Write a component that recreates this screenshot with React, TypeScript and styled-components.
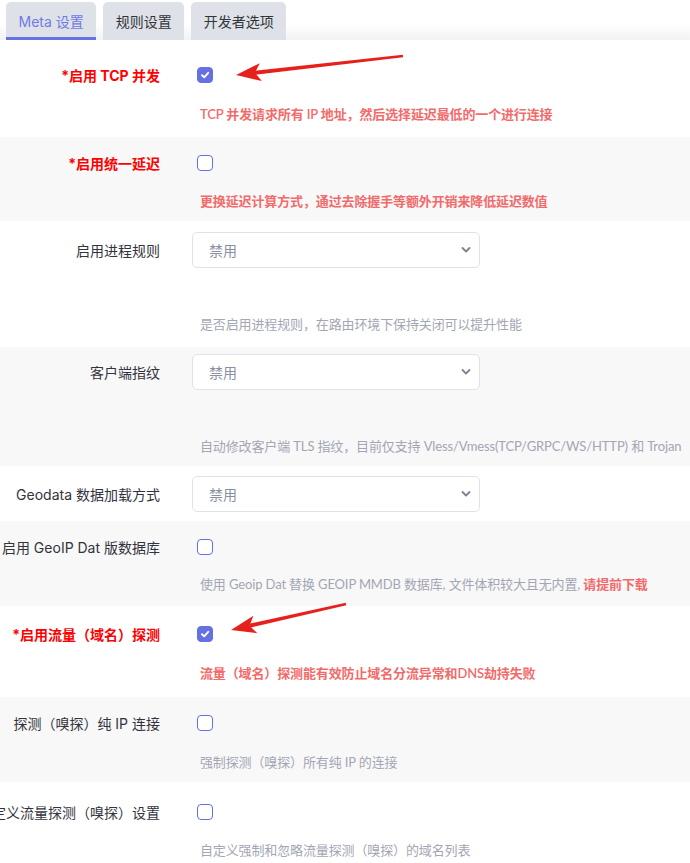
import React from "react";
import styled, { createGlobalStyle } from "styled-components";

const Global = createGlobalStyle`
  html, body { margin: 0; padding: 0; background: #fff; overflow: hidden; }
  body { font-family: Inter, "Noto Sans CJK SC", "Noto Sans", sans-serif; }
  * { box-sizing: border-box; }
`;

const Page = styled.div`
  position: relative;
  width: 690px;
  height: 863px;
  overflow: hidden;
`;

const TabBar = styled.div`
  display: flex;
  gap: 7px;
  height: 40px;
  padding: 2px 0 0 6px;
  background: linear-gradient(to bottom, #ffffff 60%, #f1f2f4 100%);
`;

const Tab = styled.div<{ $active?: boolean }>`
  display: flex;
  align-items: center;
  padding: 0 12.5px;
  height: 38px;
  background: #dee2e8;
  border-radius: 5px 5px 0 0;
  font-size: 14px;
  color: ${(p) => (p.$active ? "#6f7ae6" : "#33343a")};
  border-bottom: 3px solid ${(p) => (p.$active ? "#6572e2" : "transparent")};
  padding-top: 2px;
`;

const Row = styled.div<{ $grey?: boolean; $pt: number; $pb: number }>`
  display: grid;
  grid-template-columns: 160px 1fr;
  column-gap: 32px;
  background: ${(p) => (p.$grey ? "#f8f8f8" : "#ffffff")};
  padding: ${(p) => p.$pt}px 0 ${(p) => p.$pb}px 0;
`;

const LabelCell = styled.div<{ $h: number }>`
  display: flex;
  justify-content: flex-end;
  align-items: center;
  height: ${(p) => p.$h}px;
`;

const Label = styled.span<{ $req?: boolean }>`
  white-space: nowrap;
  font-size: 14px;
  color: ${(p) => (p.$req ? "#ff0000" : "#32333d")};
  font-weight: ${(p) => (p.$req ? 700 : 400)};
`;

const Content = styled.div`
  display: flex;
  flex-direction: column;
  align-items: flex-start;
  min-width: 0;
`;

const ControlLine = styled.div<{ $h: number }>`
  display: flex;
  align-items: center;
  height: ${(p) => p.$h}px;
`;

const Box = styled.span<{ $checked?: boolean }>`
  display: inline-flex;
  align-items: center;
  justify-content: center;
  width: 16px;
  height: 16px;
  margin-left: 5px;
  border-radius: 4px;
  border: 1px solid #6570e3;
  background: ${(p) => (p.$checked ? "#6570e3" : "#fff")};
`;

const Select = styled.div`
  display: flex;
  align-items: center;
  justify-content: space-between;
  width: 288px;
  height: 36px;
  border: 1px solid #dfe2e7;
  border-radius: 5px;
  background: #fff;
  padding: 0 8px 0 16px;
  font-size: 14px;
  color: #8a90a2;
`;

const Desc = styled.div<{ $mt: number; $red?: boolean }>`
  margin-top: ${(p) => p.$mt}px;
  padding-left: 8px;
  height: 20px;
  line-height: 20px;
  font-family: Lato, "Noto Sans CJK SC", sans-serif;
  font-size: 13px;
  letter-spacing: -0.13px;
  white-space: nowrap;
  color: ${(p) => (p.$red ? "#f36a6a" : "#a3a6b4")};
  font-weight: ${(p) => (p.$red ? 600 : 400)};
`;

const Strong = styled.span`
  color: #f36a6a;
  font-weight: 700;
`;

const Overlay = styled.svg`
  position: absolute;
  left: 0;
  top: 0;
  pointer-events: none;
`;

const Check = () => (
  <svg width="10" height="10" viewBox="0 0 10 10">
    <path d="M2 5.2 L4.2 7.3 L8.2 2.8" stroke="#fff" strokeWidth="1.9" fill="none" strokeLinecap="round" strokeLinejoin="round" />
  </svg>
);

const Chevron = () => (
  <svg width="10" height="8" viewBox="0 0 10 8">
    <path d="M1.5 2 L5 5.5 L8.5 2" stroke="#7b8293" strokeWidth="1.8" fill="none" strokeLinecap="round" strokeLinejoin="round" />
  </svg>
);

type RowDef = {
  label: string;
  req?: boolean;
  kind: "check" | "select";
  checked?: boolean;
  desc?: React.ReactNode;
  redDesc?: boolean;
  grey?: boolean;
  pt: number;
  pb: number;
  mt?: number;
};

const rows: RowDef[] = [
  { label: "*启用 TCP 并发", req: true, kind: "check", checked: true, desc: "TCP 并发请求所有 IP 地址，然后选择延迟最低的一个进行连接", redDesc: true, pt: 25, pb: 13, mt: 19 },
  { label: "*启用统一延迟", req: true, kind: "check", desc: "更换延迟计算方式，通过去除握手等额外开销来降低延迟数值", redDesc: true, grey: true, pt: 16, pb: 10, mt: 18 },
  { label: "启用进程规则", kind: "select", desc: "是否启用进程规则，在路由环境下保持关闭可以提升性能", pt: 11, pb: 13, mt: 46 },
  { label: "客户端指纹", kind: "select", desc: "自动修改客户端 TLS 指纹，目前仅支持 Vless/Vmess(TCP/GRPC/WS/HTTP) 和 Trojan", grey: true, pt: 7, pb: 10, mt: 46 },
  { label: "Geodata 数据加载方式", kind: "select", pt: 10, pb: 9 },
  {
    label: "启用 GeoIP Dat 版数据库",
    kind: "check",
    desc: (
      <>
        使用 Geoip Dat 替换 GEOIP MMDB 数据库, 文件体积较大且无内置, <Strong>请提前下载</Strong>
      </>
    ),
    grey: true,
    pt: 16,
    pb: 12,
    mt: 17,
  },
  { label: "*启用流量（域名）探测", req: true, kind: "check", checked: true, desc: "流量（域名）探测能有效防止域名分流异常和DNS劫持失败", redDesc: true, pt: 18, pb: 14, mt: 19 },
  { label: "探测（嗅探）纯 IP 连接", kind: "check", desc: "强制探测（嗅探）所有纯 IP 的连接", grey: true, pt: 16, pb: 10, mt: 19 },
  { label: "自定义流量探测（嗅探）设置", kind: "check", desc: "自定义强制和忽略流量探测（嗅探）的域名列表", pt: 20, pb: 10, mt: 18 },
];

const Arrow = ({ tip, tail }: { tip: [number, number]; tail: [number, number] }) => {
  const dx = tail[0] - tip[0];
  const dy = tail[1] - tip[1];
  const len = Math.hypot(dx, dy);
  const ux = dx / len;
  const uy = dy / len;
  const nx = -uy;
  const ny = ux;
  const bx = tip[0] + 25 * ux;
  const by = tip[1] + 25 * uy;
  const b1 = [bx + 9 * nx, by + 9 * ny];
  const b2 = [bx - 9 * nx, by - 9 * ny];
  const notch = [tip[0] + 19 * ux, tip[1] + 19 * uy];
  const s1 = [notch[0] + 2 * nx, notch[1] + 2 * ny];
  const s2 = [notch[0] - 2 * nx, notch[1] - 2 * ny];
  const t1 = [tail[0] + 1.2 * nx, tail[1] + 1.2 * ny];
  const t2 = [tail[0] - 1.2 * nx, tail[1] - 1.2 * ny];
  return (
    <g fill="#e8201c">
      <polygon points={`${s1.join(",")} ${t1.join(",")} ${t2.join(",")} ${s2.join(",")}`} />
      <polygon points={`${tip.join(",")} ${b1.join(",")} ${notch.join(",")} ${b2.join(",")}`} />
    </g>
  );
};

export default function App() {
  return (
    <Page>
      <Global />
      <TabBar>
        <Tab $active>Meta 设置</Tab>
        <Tab>规则设置</Tab>
        <Tab>开发者选项</Tab>
      </TabBar>
      {rows.map((r, i) => {
        const h = r.kind === "select" ? 36 : 20;
        return (
          <Row key={i} $grey={r.grey} $pt={r.pt} $pb={r.pb}>
            <LabelCell $h={h}>
              <Label $req={r.req}>{r.label}</Label>
            </LabelCell>
            <Content>
              <ControlLine $h={h}>
                {r.kind === "check" ? (
                  <Box $checked={r.checked}>{r.checked && <Check />}</Box>
                ) : (
                  <Select>
                    <span>禁用</span>
                    <Chevron />
                  </Select>
                )}
              </ControlLine>
              {r.desc && (
                <Desc $mt={r.mt ?? 18} $red={r.redDesc}>
                  {r.desc}
                </Desc>
              )}
            </Content>
          </Row>
        );
      })}
      <Overlay width="690" height="863" viewBox="0 0 690 863">
        <Arrow tip={[236, 75]} tail={[403, 56]} />
        <Arrow tip={[231, 630]} tail={[346, 604]} />
      </Overlay>
    </Page>
  );
}
